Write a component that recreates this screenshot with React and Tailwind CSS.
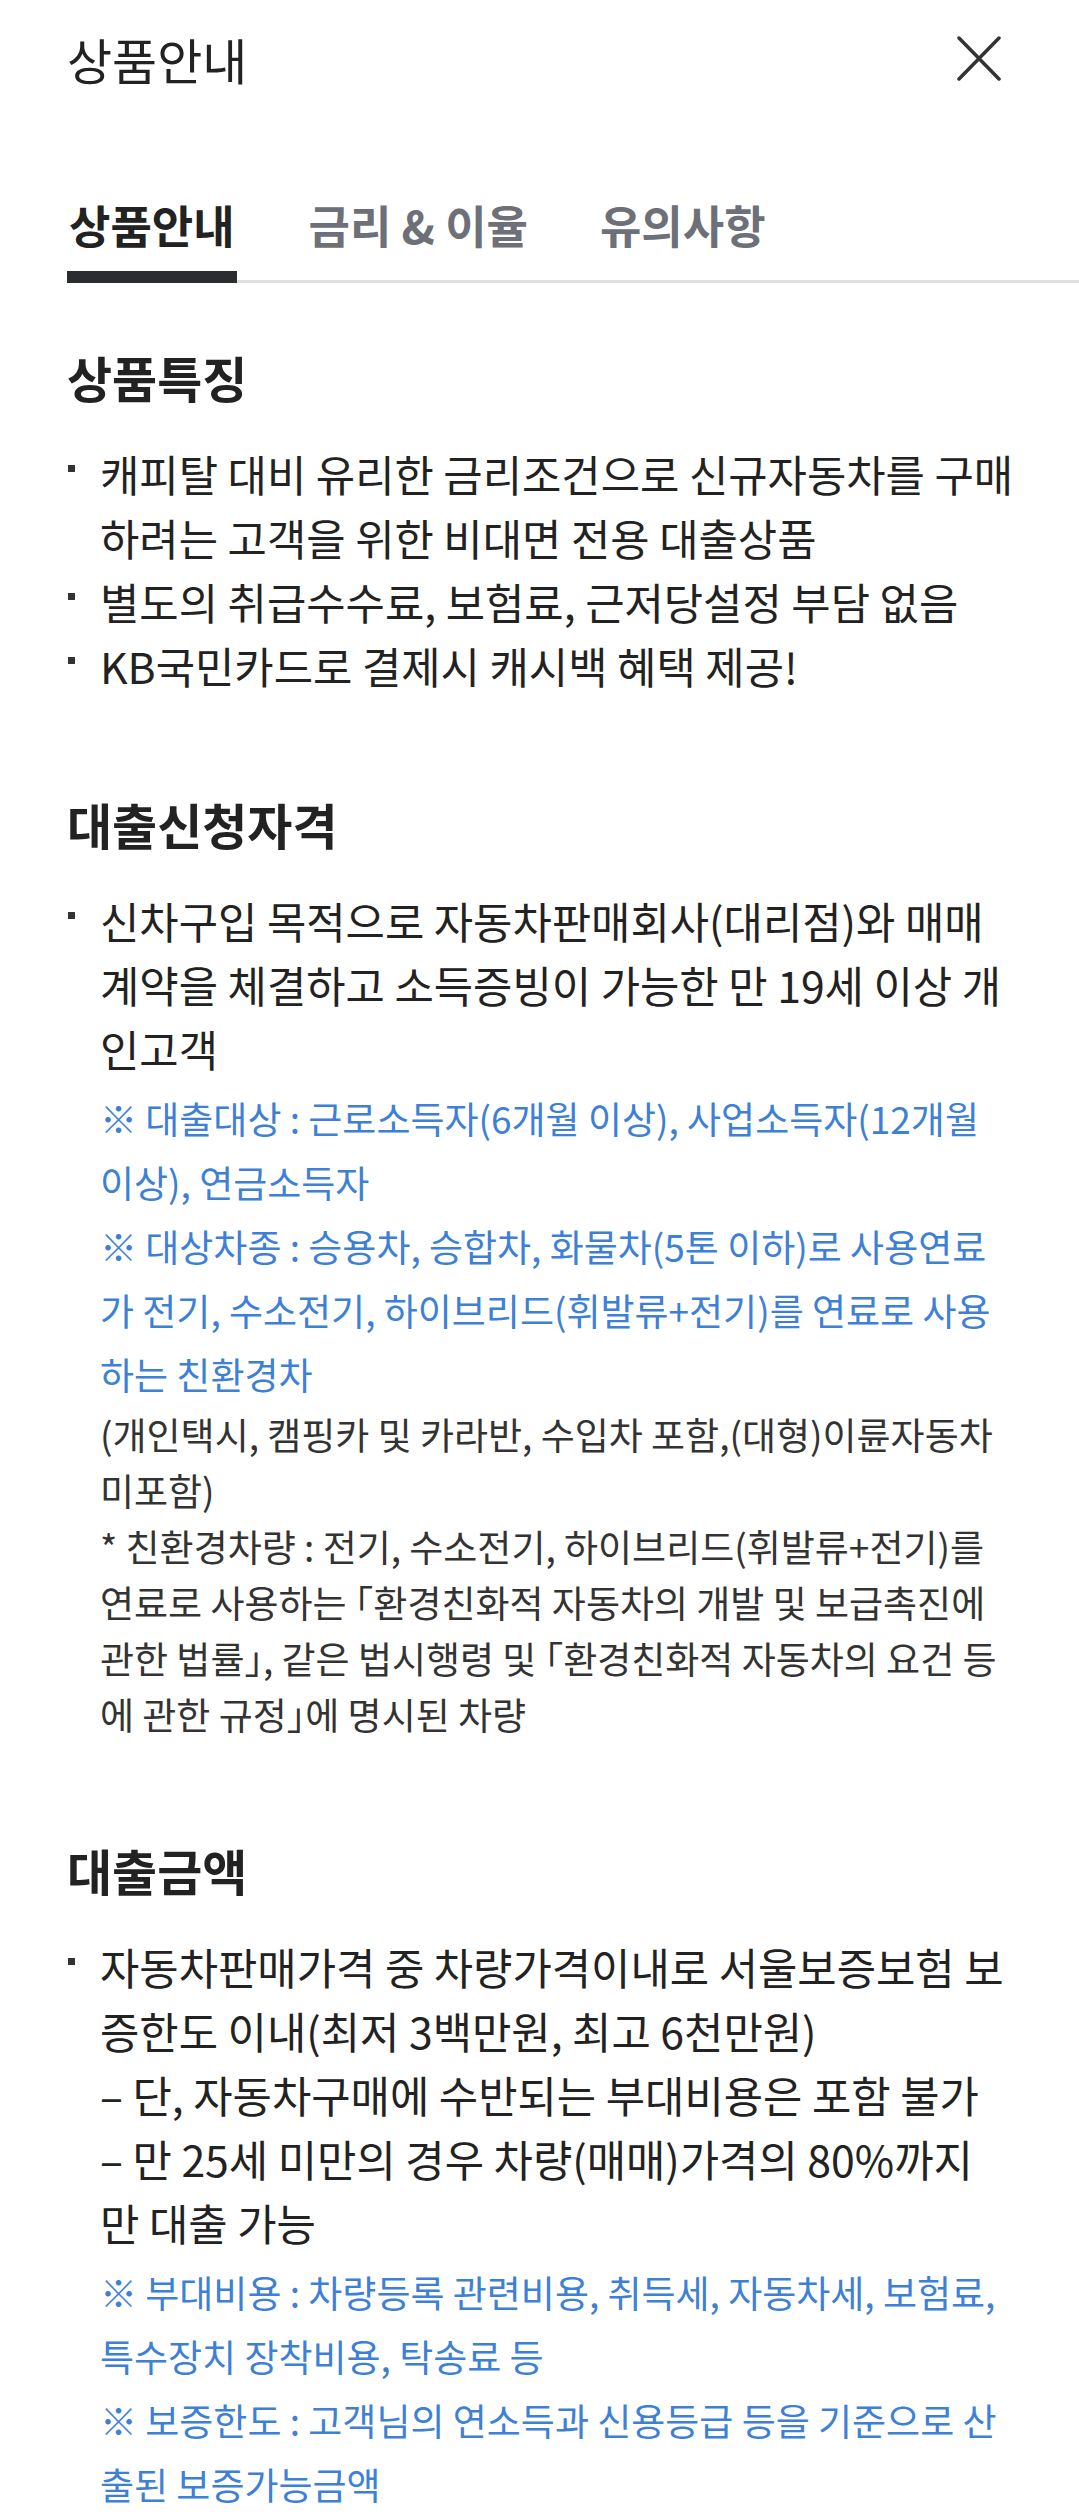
import React from 'react';

// 본문 줄바꿈은 원본 화면과 같게 줄 단위로 고정
const Bullet = ({ children }) => (
  <li className="flex">
    <span className="w-[33px] shrink-0 pt-[24px]">
      <span className="block w-[7px] h-[7px] ml-[1px] bg-[#333]" />
    </span>
    <div className="min-w-0">{children}</div>
  </li>
);

const Lines = ({ lines, className }) => (
  <div className={className}>
    {lines.map((l, i) => (
      <p key={i} className="whitespace-nowrap">
        {l}
      </p>
    ))}
  </div>
);

// 낫표는 반각으로
const Open = () => <span className="[font-feature-settings:'halt']">「</span>;
const Close = () => <span className="[font-feature-settings:'halt']">」</span>;

const MAIN = 'text-[42.75px] leading-[64px] text-[#222]';
const BLUE = 'mt-[6px] text-[37px] leading-[64px] text-[#3d80d6]';
const DARK = 'text-[37px] leading-[56px] text-[#333]';

const Heading = ({ children }) => (
  <h2 className="text-[49px] leading-[52px] font-bold text-[#222]">{children}</h2>
);

export default function App() {
  return (
    <div className="min-h-[2517px] w-full bg-white font-['Noto_Sans_CJK_KR',sans-serif] overflow-hidden">
      {/* Header */}
      <header className="flex h-[116px] items-center justify-between pl-[67px] pr-[78px]">
        <h1 className="text-[49px] leading-none font-normal text-[#222]">상품안내</h1>
        <button className="flex items-center justify-center" aria-label="닫기">
          <svg width="44" height="45" viewBox="0 0 44 45" fill="none">
            <path d="M2 2 L42 43 M42 2 L2 43" stroke="#333" strokeWidth="3.5" strokeLinecap="round" />
          </svg>
        </button>
      </header>

      {/* Tabs */}
      <div className="ml-[67px] flex border-b-[3px] border-[#e0e0e0] pt-[85px]">
        <button className="-mb-[3px] border-b-[12px] border-[#2b2c30] px-[2px] pb-[22px] text-[45px] leading-[48px] font-bold text-[#222]">
          상품안내
        </button>
        <button className="-mb-[3px] ml-[70px] border-b-[12px] border-transparent px-[2px] pb-[22px] text-[45px] leading-[48px] font-bold text-[#6d7078]">
          금리 &amp; 이율
        </button>
        <button className="-mb-[3px] ml-[68px] border-b-[12px] border-transparent px-[2px] pb-[22px] text-[45px] leading-[48px] font-bold text-[#6d7078]">
          유의사항
        </button>
      </div>

      <main className="px-[67px]">
        {/* 상품특징 */}
        <section className="mt-[68px]">
          <Heading>상품특징</Heading>
          <ul className="mt-[38px]">
            <Bullet>
              <Lines
                className={MAIN}
                lines={['캐피탈 대비 유리한 금리조건으로 신규자동차를 구매', '하려는 고객을 위한 비대면 전용 대출상품']}
              />
            </Bullet>
            <Bullet>
              <Lines className={MAIN} lines={['별도의 취급수수료, 보험료, 근저당설정 부담 없음']} />
            </Bullet>
            <Bullet>
              <Lines className={MAIN} lines={['KB국민카드로 결제시 캐시백 혜택 제공!']} />
            </Bullet>
          </ul>
        </section>

        {/* 대출신청자격 */}
        <section className="mt-[101px]">
          <Heading>대출신청자격</Heading>
          <ul className="mt-[38px]">
            <Bullet>
              <Lines
                className={MAIN}
                lines={[
                  '신차구입 목적으로 자동차판매회사(대리점)와 매매',
                  '계약을 체결하고 소득증빙이 가능한 만 19세 이상 개',
                  '인고객',
                ]}
              />
              <Lines
                className={BLUE}
                lines={[
                  '※ 대출대상 : 근로소득자(6개월 이상), 사업소득자(12개월',
                  '이상), 연금소득자',
                  '※ 대상차종 : 승용차, 승합차, 화물차(5톤 이하)로 사용연료',
                  '가 전기, 수소전기, 하이브리드(휘발류+전기)를 연료로 사용',
                  '하는 친환경차',
                ]}
              />
              <div className={DARK}>
                <p className="whitespace-nowrap">(개인택시, 캠핑카 및 카라반, 수입차 포함,(대형)이륜자동차</p>
                <p className="whitespace-nowrap">미포함)</p>
                <p className="whitespace-nowrap">* 친환경차량 : 전기, 수소전기, 하이브리드(휘발류+전기)를</p>
                <p className="whitespace-nowrap">
                  연료로 사용하는 <Open />환경친화적 자동차의 개발 및 보급촉진에
                </p>
                <p className="whitespace-nowrap">
                  관한 법률<Close />, 같은 법시행령 및 <Open />환경친화적 자동차의 요건 등
                </p>
                <p className="whitespace-nowrap">
                  에 관한 규정<Close />에 명시된 차량
                </p>
              </div>
            </Bullet>
          </ul>
        </section>

        {/* 대출금액 */}
        <section className="mt-[102px]">
          <Heading>대출금액</Heading>
          <ul className="mt-[38px]">
            <Bullet>
              <Lines
                className={MAIN}
                lines={[
                  '자동차판매가격 중 차량가격이내로 서울보증보험 보',
                  '증한도 이내(최저 3백만원, 최고 6천만원)',
                  '– 단, 자동차구매에 수반되는 부대비용은 포함 불가',
                  '– 만 25세 미만의 경우 차량(매매)가격의 80%까지',
                  '만 대출 가능',
                ]}
              />
              <Lines
                className={BLUE}
                lines={[
                  '※ 부대비용 : 차량등록 관련비용, 취득세, 자동차세, 보험료,',
                  '특수장치 장착비용, 탁송료 등',
                  '※ 보증한도 : 고객님의 연소득과 신용등급 등을 기준으로 산',
                  '출된 보증가능금액',
                ]}
              />
            </Bullet>
          </ul>
        </section>
      </main>
    </div>
  );
}
